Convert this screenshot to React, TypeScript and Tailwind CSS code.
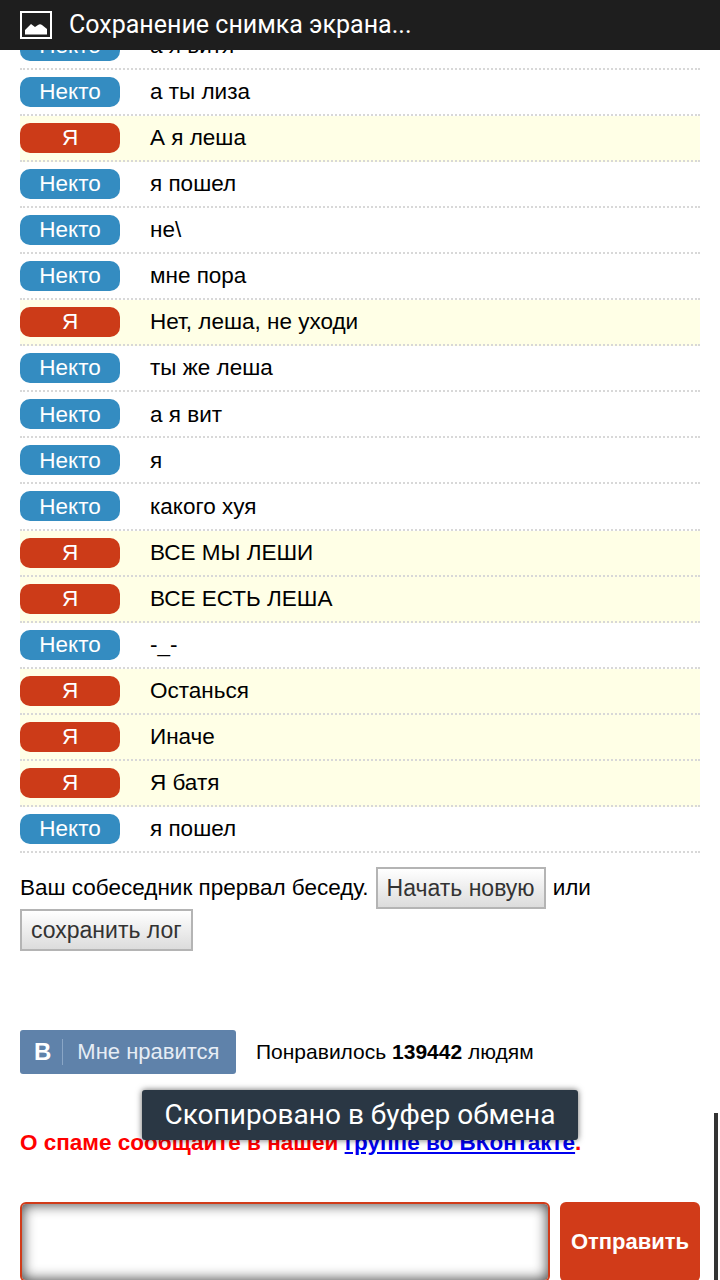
const rows: [boolean, string][] = [
  [false, "а я витя"],
  [false, "а ты лиза"],
  [true, "А я леша"],
  [false, "я пошел"],
  [false, "не\\"],
  [false, "мне пора"],
  [true, "Нет, леша, не уходи"],
  [false, "ты же леша"],
  [false, "а я вит"],
  [false, "я"],
  [false, "какого хуя"],
  [true, "ВСЕ МЫ ЛЕШИ"],
  [true, "ВСЕ ЕСТЬ ЛЕША"],
  [false, "-_-"],
  [true, "Останься"],
  [true, "Иначе"],
  [true, "Я батя"],
  [false, "я пошел"],
];

function GreyButton({ children }: { children: React.ReactNode }) {
  return (
    <button className="inline-flex h-[42px] items-center border-2 border-[#b4b4b4] bg-gradient-to-b from-white to-[#dcdcdc] px-[9px] text-[23px] text-[#333]">
      {children}
    </button>
  );
}

export default function App() {
  return (
    <div className="relative h-[1280px] w-[720px] overflow-hidden bg-white font-['Liberation_Sans',sans-serif] text-[22.5px] text-black">
      <div className="absolute inset-x-0 top-0 z-10 flex h-[50px] items-center bg-[#1e1e1e] pl-[20px] text-white">
        <svg width="32" height="28" viewBox="0 0 32 28" className="mr-[17px]">
          <rect x="1" y="1" width="30" height="26" fill="none" stroke="white" strokeWidth="2" />
          <path d="M5 23.5 V19 L11 13 L15 16 L18 14 Q20 12.5 22 14 L27 18 V23.5 Z" fill="white" />
        </svg>
        <span className="font-['Roboto',sans-serif] text-[25px]">Сохранение снимка экрана...</span>
      </div>

      <div className="px-[20px] pt-[24px]">
        {rows.map(([mine, text], i) => (
          <div
            key={i}
            className={`flex h-[46.06px] items-center border-b-2 border-dotted border-[#d8d8d8] ${mine ? "bg-[#ffffe6]" : ""}`}
          >
            <span
              className={`flex h-[30px] w-[100px] items-center justify-center rounded-[10px] text-white ${mine ? "bg-[#cc3b18]" : "bg-[#348cc1]"}`}
            >
              {mine ? "Я" : "Некто"}
            </span>
            <span className="ml-[30px]">{text}</span>
          </div>
        ))}

        <div className="mt-[14px] leading-[40px]">
          <div className="flex items-center">
            <span>Ваш собеседник прервал беседу.</span>
            <span className="ml-[7px]"><GreyButton>Начать новую</GreyButton></span>
            <span className="ml-[7px]">или</span>
          </div>
          <div className="flex">
            <GreyButton>сохранить лог</GreyButton>
          </div>
        </div>

        <div className="mt-[79px] flex items-center">
          <div className="flex h-[44px] w-[216px] items-center rounded-[3px] bg-[#5f82aa] text-[22px] text-[#e6edf5]">
            <span className="ml-[14px] text-[24px] font-bold text-white">В</span>
            <span className="ml-[11px] h-[26px] w-px bg-[#8aa6c6]" />
            <span className="ml-[14px]">Мне нравится</span>
          </div>
          <span className="ml-[20px] text-[21px]">
            Понравилось <b>139442</b> людям
          </span>
        </div>

        <p className="mt-[52px] text-[22.5px] font-bold text-[#f00]">
          О спаме сообщайте в нашей{" "}
          <a href="#" className="text-[#00e] underline">группе во ВКонтакте</a>.
        </p>

        <div className="mt-[42px] flex h-[80px] gap-[10px]">
          <div className="w-[530px] rounded-[6px] border-2 border-[#d13b19] bg-white shadow-[inset_0_0_14px_rgba(0,0,0,0.8)]" />
          <button className="w-[140px] rounded-[6px] bg-[#d13b19] text-[22px] font-bold text-white">Отправить</button>
        </div>
      </div>

      <div className="absolute left-[142px] top-[1090px] z-10 flex h-[50px] w-[436px] items-center justify-center rounded-[3px] bg-[#2a3744] font-['Roboto',sans-serif] text-[28px] text-white shadow-[0_0_6px_rgba(0,0,0,0.6)]">
        Скопировано в буфер обмена
      </div>
      <div className="absolute right-[2px] top-[1113px] h-[167px] w-[4px] bg-[#333]" />
    </div>
  );
}
